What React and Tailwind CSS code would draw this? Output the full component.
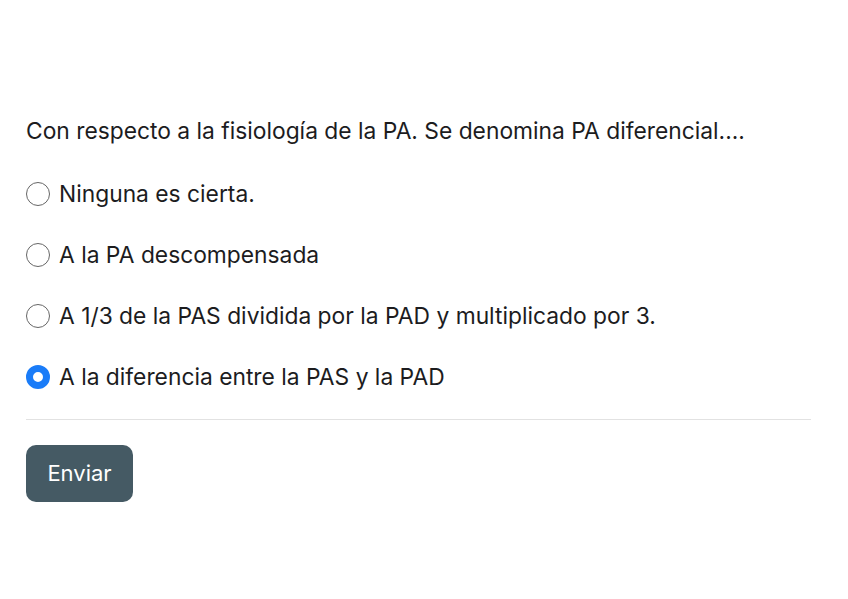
import { useState } from 'react';

const options = [
  'Ninguna es cierta.',
  'A la PA descompensada',
  'A 1/3 de la PAS dividida por la PAD y multiplicado por 3.',
  'A la diferencia entre la PAS y la PAD',
];

function Radio({ checked }) {
  if (checked) {
    return <span className="w-6 h-6 rounded-full border-[7px] border-[#1a7cf8] bg-white shrink-0" />;
  }
  return <span className="w-6 h-6 rounded-full border-[1.5px] border-[#666666] bg-white shrink-0" />;
}

export default function App() {
  const [selected, setSelected] = useState(3);

  return (
    <div className="w-[848px] h-[599px] bg-white font-['Inter',sans-serif] text-[#1c1c1e]">
      <div className="pt-[117px] pl-[26px] pr-[37px]">
        <div className="text-[22.8px] leading-[28px] whitespace-nowrap">
          Con respecto a la fisiología de la PA. Se denomina PA diferencial....
        </div>
        <div className="flex flex-col gap-[33px] mt-[35px]">
          {options.map((opt, i) => (
            <label
              key={i}
              className="flex items-center gap-[9px] cursor-pointer h-[28px]"
              onClick={() => setSelected(i)}
            >
              <Radio checked={selected === i} />
              <span className="text-[22.8px] leading-[28px] whitespace-nowrap">{opt}</span>
            </label>
          ))}
        </div>
        <div className="mt-[28px] border-t border-[#e2e2e2]" />
        <button className="mt-[25px] w-[107px] h-[57px] rounded-[10px] bg-[#455a64] text-white text-[22px]">
          Enviar
        </button>
      </div>
    </div>
  );
}
